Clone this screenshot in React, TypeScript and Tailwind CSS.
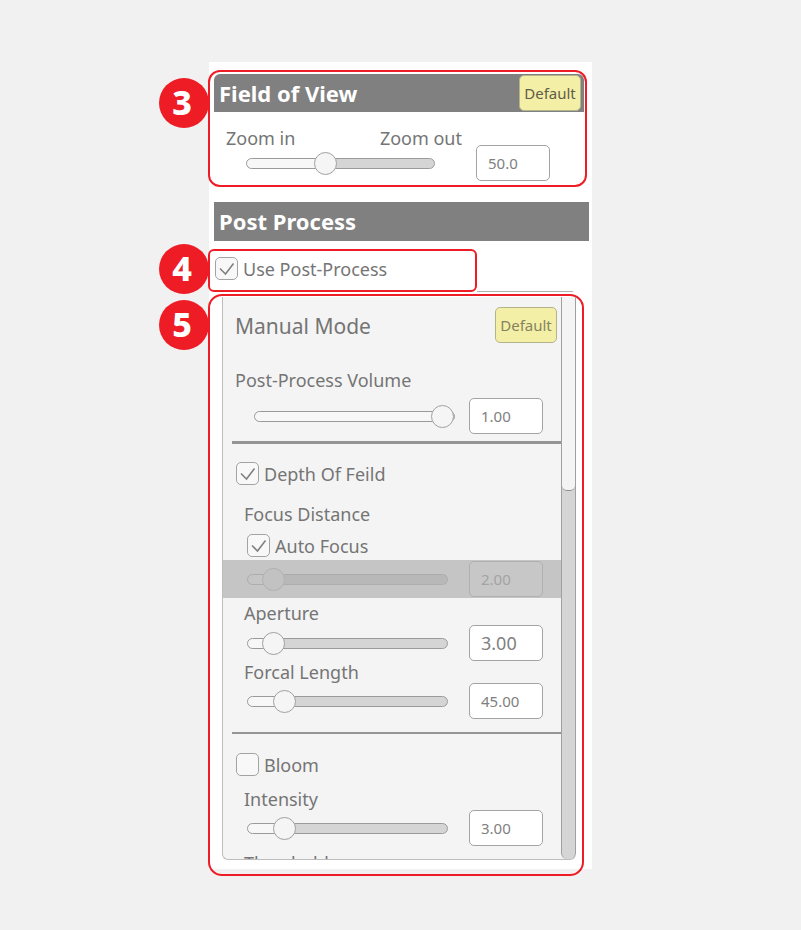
import { useState } from 'react'
import type { ReactNode } from 'react'
import clsx from 'clsx'

interface SliderRowProps {
  label: string;
  position: number;
  value: string;
  className?: string;
  large?: boolean;
  disabled?: boolean;
}

function Badge({ children, className }: { children: ReactNode; className: string }) {
  return (
    <span
      className={clsx(
        "absolute left-[-51px] flex size-[50px] items-center justify-center rounded-full bg-[#ee1c25] pb-0.5 pr-1 font-['Noto_Sans',sans-serif] text-[34px] font-extrabold text-white",
        className
      )}
    >
      {children}
    </span>
  )
}

function DefaultButton({ className }: { className: string }) {
  return (
    <button
      type="button"
      className={clsx('h-9 w-[62px] shrink-0 rounded-[5px] border border-[#b5b38a] bg-[#f4efa6] text-[15px]', className)}
    >
      Default
    </button>
  )
}

function Slider({ label, position, disabled }: { label: string; position: number; disabled?: boolean }) {
  const [pos, setPos] = useState(position)
  const fill = disabled ? '#c5c5c5' : '#f7f7f7'
  const rest = disabled ? '#b8b8b8' : '#d5d5d5'

  return (
    <input
      type="range"
      aria-label={label}
      min={0}
      max={100}
      value={pos}
      disabled={disabled}
      onChange={(e) => setPos(Number(e.target.value))}
      style={{ background: `linear-gradient(to right, ${fill} ${pos}%, ${rest} ${pos}%)` }}
      className={clsx(
        'block h-[11px] w-full min-w-0 appearance-none rounded-full border [&::-webkit-slider-thumb]:size-[23px] [&::-webkit-slider-thumb]:appearance-none [&::-webkit-slider-thumb]:rounded-full [&::-webkit-slider-thumb]:border',
        disabled
          ? 'border-[#adadad] [&::-webkit-slider-thumb]:border-[#b0b0b0] [&::-webkit-slider-thumb]:bg-[#c2c2c2]'
          : 'border-[#9a9a9a] [&::-webkit-slider-thumb]:border-[#a0a0a0] [&::-webkit-slider-thumb]:bg-[#f5f5f5]'
      )}
    />
  )
}

function NumberBox({ label, value, large, disabled }: { label: string; value: string; large?: boolean; disabled?: boolean }) {
  const [text, setText] = useState(value)

  return (
    <input
      type="text"
      aria-label={label}
      value={text}
      disabled={disabled}
      onChange={(e) => setText(e.target.value)}
      className={clsx(
        'h-9 w-[74px] shrink-0 rounded-[5px] border px-[11px]',
        large ? 'text-lg' : 'text-[15px]',
        disabled ? 'border-[#b0b0b0] bg-[#c7c7c7] text-[#a3a3a3]' : 'border-[#a3a3a3] bg-white text-[#808080]'
      )}
    />
  )
}

function SliderRow({ label, position, value, className, large, disabled }: SliderRowProps) {
  return (
    <div className={clsx('flex items-center pr-[18px]', className)}>
      <Slider label={label} position={position} disabled={disabled} />
      <NumberBox label={label + ' value'} value={value} large={large} disabled={disabled} />
    </div>
  )
}

function CheckRow({ label, checked, className }: { label: string; checked: boolean; className?: string }) {
  const [on, setOn] = useState(checked)

  return (
    <label className={clsx('flex h-[23px] items-center gap-[5px]', className)}>
      <span className="relative flex">
        <input
          type="checkbox"
          checked={on}
          onChange={(e) => setOn(e.target.checked)}
          className="size-[23px] appearance-none rounded-[5px] border border-[#a3a3a3] bg-[#f8f8f8]"
        />
        {on && (
          <svg viewBox="0 0 23 23" className="pointer-events-none absolute inset-0 size-full" fill="none" stroke="#808080" strokeWidth="1.6">
            <path d="M5 11.5 L10.5 17 L18.5 6.5" />
          </svg>
        )}
      </span>
      {label}
    </label>
  )
}

export default function App() {
  return (
    <div className="min-h-screen bg-[#f1f1f1] px-14 py-[62px] font-['Noto_Sans',sans-serif] text-lg leading-[22px] text-[#757575]">
      <main className="mx-auto flow-root max-w-[383px] bg-white pt-2">
        {/* Field of View */}
        <section className="relative -ml-px mr-[5px] rounded-xl border-2 border-[#ee1c25] pt-0.5">
          <Badge className="top-[6px]">3</Badge>
          <div className="ml-1 mr-px flex h-[38px] items-center justify-between rounded-t-md bg-[#808080] pl-[5px] pr-[3px]">
            <h2 className="text-[22px] font-bold text-white">Field of View</h2>
            <DefaultButton className="text-[#5f5d48]" />
          </div>
          <div className="flex h-[73px] items-center gap-[14px] pl-4 pr-[35px]">
            <div className="min-w-0 flex-1 pb-0.5">
              <div className="flex justify-between">
                <span>Zoom in</span>
                <span>Zoom out</span>
              </div>
              <div className="mt-[9px] pl-5 pr-[27px]">
                <Slider label="Zoom" position={41} />
              </div>
            </div>
            <div className="flex pt-7">
              <NumberBox label="Zoom value" value="50.0" />
            </div>
          </div>
        </section>

        {/* Post Process */}
        <h2 className="ml-[5px] mr-[3px] mt-[15px] flex h-[39px] items-center bg-[#808080] pb-0.5 pl-[5px] text-[22px] font-bold text-white">
          Post Process
        </h2>
        <div className="mt-2 flex items-end">
          <section className="relative -ml-px h-[43px] w-[269px] rounded-md border-2 border-[#ee1c25] pl-[5px] pt-[6px]">
            <Badge className="top-[-7px]">4</Badge>
            <CheckRow label="Use Post-Process" checked />
          </section>
          <div className="mr-[19px] h-px flex-1 bg-[#b0b0b0]" />
        </div>

        <section className="relative -mb-[7px] -ml-px mr-2 mt-0.5 rounded-[14px] border-2 border-[#ee1c25] pb-[14px] pl-3 pr-[6px] pt-px">
          <Badge className="top-1">5</Badge>
          <div className="flex h-[563px] overflow-hidden rounded-b-md border-b border-l border-[#bdbdbd] bg-[#f4f4f4]">
            <div className="min-w-0 flex-1">
              <div className="flex items-center justify-between pl-3 pr-1 pt-[10px]">
                <h3 className="pt-0.5 text-[21px]">Manual Mode</h3>
                <DefaultButton className="text-[#85835f]" />
              </div>
              <p className="mt-[26px] pl-3">Post-Process Volume</p>
              <SliderRow label="Post-Process Volume" position={100} value="1.00" className="mt-[7px] gap-[14px] pl-[31px]" />
              <hr className="ml-[9px] mt-[7px] border-t-3 border-[#949494]" />

              <CheckRow label="Depth Of Feild" checked className="mt-[18px] pl-[13px]" />
              <p className="mt-[18px] pl-[21px]">Focus Distance</p>
              <CheckRow label="Auto Focus" checked className="mt-[9px] pl-6" />
              <SliderRow label="Focus Distance" position={8} value="2.00" disabled className="mt-[3px] h-[38px] gap-[21px] bg-[#c5c5c5] pl-6" />
              <p className="mt-1 pl-[21px]">Aperture</p>
              <SliderRow label="Aperture" position={8} value="3.00" large className="mt-px gap-[21px] pl-6" />
              <p className="pl-[21px]">Forcal Length</p>
              <SliderRow label="Forcal Length" position={14} value="45.00" className="gap-[21px] pl-6" />
              <hr className="ml-[9px] mt-[13px] border-t-2 border-[#949494]" />

              <CheckRow label="Bloom" checked={false} className="mt-[19px] pl-[13px]" />
              <p className="mt-3 pl-[21px]">Intensity</p>
              <SliderRow label="Intensity" position={14} value="3.00" className="gap-[21px] pl-6" />
              <p className="mt-[6px] pl-[21px]">Threshold</p>
            </div>
            {/* Scrollbar */}
            <div className="w-[15px] shrink-0 rounded-b-md border-x border-[#a0a0a0] bg-[#d5d5d5]">
              <div className="h-[194px] rounded-b-[5px] border-b border-[#8c8c8c] bg-[#f4f4f4]" />
            </div>
          </div>
        </section>
      </main>
    </div>
  )
}
